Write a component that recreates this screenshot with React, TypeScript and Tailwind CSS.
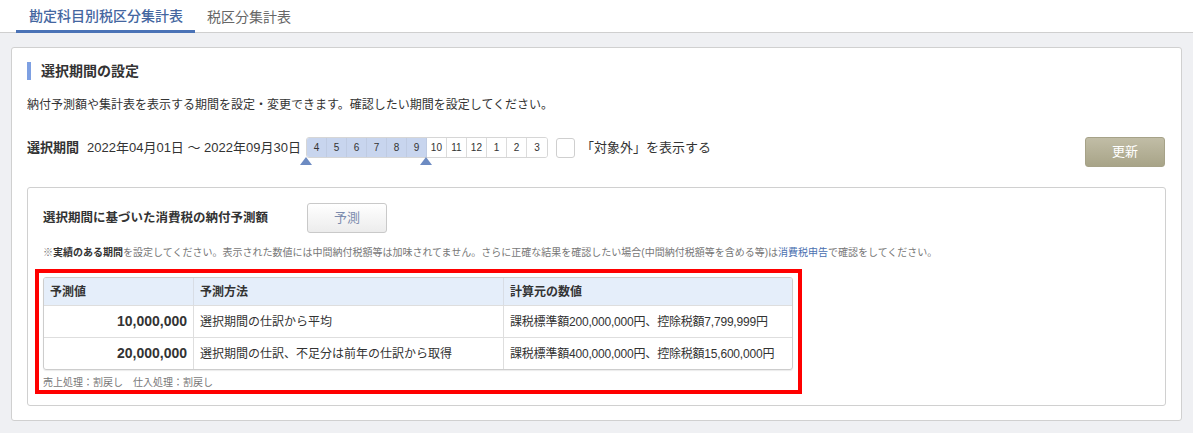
const MONTHS = [4, 5, 6, 7, 8, 9, 10, 11, 12, 1, 2, 3];
const SELECTED = new Set([4, 5, 6, 7, 8, 9]);

const ROWS = [
  {
    value: "10,000,000",
    method: "選択期間の仕訳から平均",
    source: "課税標準額200,000,000円、控除税額7,799,999円",
  },
  {
    value: "20,000,000",
    method: "選択期間の仕訳、不足分は前年の仕訳から取得",
    source: "課税標準額400,000,000円、控除税額15,600,000円",
  },
];

function Tabs() {
  return (
    <div className="flex h-[33px] border-b border-[#cfcfcf] bg-white pl-[16px]">
      <div className="flex h-[33px] items-center border-b-[3px] border-[#4a72b6] pl-[13px] pr-[12px] pt-[2px] text-[14px] font-medium text-[#44669f]">
        勘定科目別税区分集計表
      </div>
      <div className="flex h-[33px] items-center px-[12px] pt-[2px] text-[14px] text-[#666]">
        税区分集計表
      </div>
    </div>
  );
}

function MonthPicker() {
  return (
    <div className="relative">
      <div className="flex overflow-hidden rounded-[3px] border border-[#d6d6d6]">
        {MONTHS.map((m, i) => (
          <div
            key={m}
            className={`flex h-[19px] w-[20px] items-center justify-center text-[10px] leading-none ${
              i < MONTHS.length - 1 ? "border-r" : ""
            } ${
              SELECTED.has(m)
                ? "border-[#bfcbe2] bg-[#c8d5ee] text-[#333]"
                : "border-[#dcdcdc] bg-white text-[#333]"
            }`}
          >
            {m}
          </div>
        ))}
      </div>
      <div className="absolute left-[-6px] top-[20px] h-0 w-0 border-x-[6px] border-b-[8px] border-x-transparent border-b-[#6d8bc2]" />
      <div className="absolute left-[114px] top-[20px] h-0 w-0 border-x-[6px] border-b-[8px] border-x-transparent border-b-[#6d8bc2]" />
    </div>
  );
}

function ForecastTable() {
  return (
    <div className="w-[750px] overflow-hidden rounded-[3px] border border-[#cdcdcd] shadow-[0_1px_1px_rgba(0,0,0,0.08)]">
      <div className="grid grid-cols-[150px_310px_288px] bg-[#e5eefa] text-[12px] font-bold text-[#333]">
        <div className="flex h-[27px] items-center border-r border-[#d8dde5] px-[6px]">予測値</div>
        <div className="flex h-[27px] items-center border-r border-[#d8dde5] px-[6px]">予測方法</div>
        <div className="flex h-[27px] items-center px-[6px]">計算元の数値</div>
      </div>
      {ROWS.map((r) => (
        <div
          key={r.value}
          className="grid grid-cols-[150px_310px_288px] border-t border-[#dedede] text-[12px] text-[#333]"
        >
          <div className="flex h-[31px] items-center justify-end border-r border-[#dedede] px-[6px] text-[14px] font-bold">
            {r.value}
          </div>
          <div className="flex h-[31px] items-center border-r border-[#dedede] px-[6px]">{r.method}</div>
          <div className="flex h-[31px] items-center px-[6px] tracking-[-0.2px]">{r.source}</div>
        </div>
      ))}
    </div>
  );
}

export default function App() {
  return (
    <div className="h-[433px] w-full overflow-hidden bg-[#eff0f3] font-['Liberation_Sans','Noto_Sans_CJK_JP',sans-serif] text-[#333]">
      <Tabs />
      <div className="mx-[11px] mt-[14px] flex flex-col rounded-[3px] border border-[#d0d0d0] bg-white px-[15px] pb-[14px] pt-[14px]">
        <div className="flex h-[18px] items-center gap-[10px]">
          <div className="h-[18px] w-[4px] bg-[#7ea0e2]" />
          <span className="text-[14px] font-bold leading-none">選択期間の設定</span>
        </div>
        <p className="mt-[16px] text-[12px] leading-[18px]">
          納付予測額や集計表を表示する期間を設定・変更できます。確認したい期間を設定してください。
        </p>

        <div className="mt-[23px] flex items-start justify-between pr-[1px]">
          <div className="flex h-[21px] items-center">
            <span className="text-[13px] font-bold leading-none">選択期間</span>
            <span className="ml-[8px] text-[13px] leading-none">2022年04月01日 ～ 2022年09月30日</span>
            <div className="ml-[5px]">
              <MonthPicker />
            </div>
            <div className="ml-[8px] h-[20px] w-[19px] rounded-[3px] border border-[#cfcfcf] bg-white" />
            <span className="ml-[6px] text-[13px] leading-none">「対象外」を表示する</span>
          </div>
          <button className="h-[30px] w-[80px] rounded-[3px] border border-[#a6a288] bg-gradient-to-b from-[#c1bda6] to-[#a8a488] text-[13px] text-white">
            更新
          </button>
        </div>

        <div className="mt-[20px] flex flex-col rounded-[3px] border border-[#d0d0d0] px-[15px] pb-[11px] pt-[15px]">
          <div className="flex items-center">
            <span className="w-[264px] text-[12.5px] font-bold">選択期間に基づいた消費税の納付予測額</span>
            <button className="h-[30px] w-[80px] rounded-[3px] border border-[#c9c9c9] bg-gradient-to-b from-white to-[#ececec] text-[13px] text-[#7c8cae]">
              予測
            </button>
          </div>
          <p className="mt-[13px] text-[10px] leading-[14px] text-[#777]">
            ※<b className="text-[#333]">実績のある期間</b>
            を設定してください。表示された数値には中間納付税額等は加味されてません。さらに正確な結果を確認したい場合(中間納付税額等を含める等)は
            <span className="text-[#4a6fb0]">消費税申告</span>で確認をしてください。
          </p>

          <div className="ml-[-8px] mt-[9px] w-[767px] border-4 border-[#ff0000] pl-[4px] pr-[5px] pt-[4px]">
            <ForecastTable />
            <p className="mt-[6px] text-[10px] leading-[14px] text-[#777]">売上処理：割戻し　仕入処理：割戻し</p>
          </div>
        </div>
      </div>
    </div>
  );
}
